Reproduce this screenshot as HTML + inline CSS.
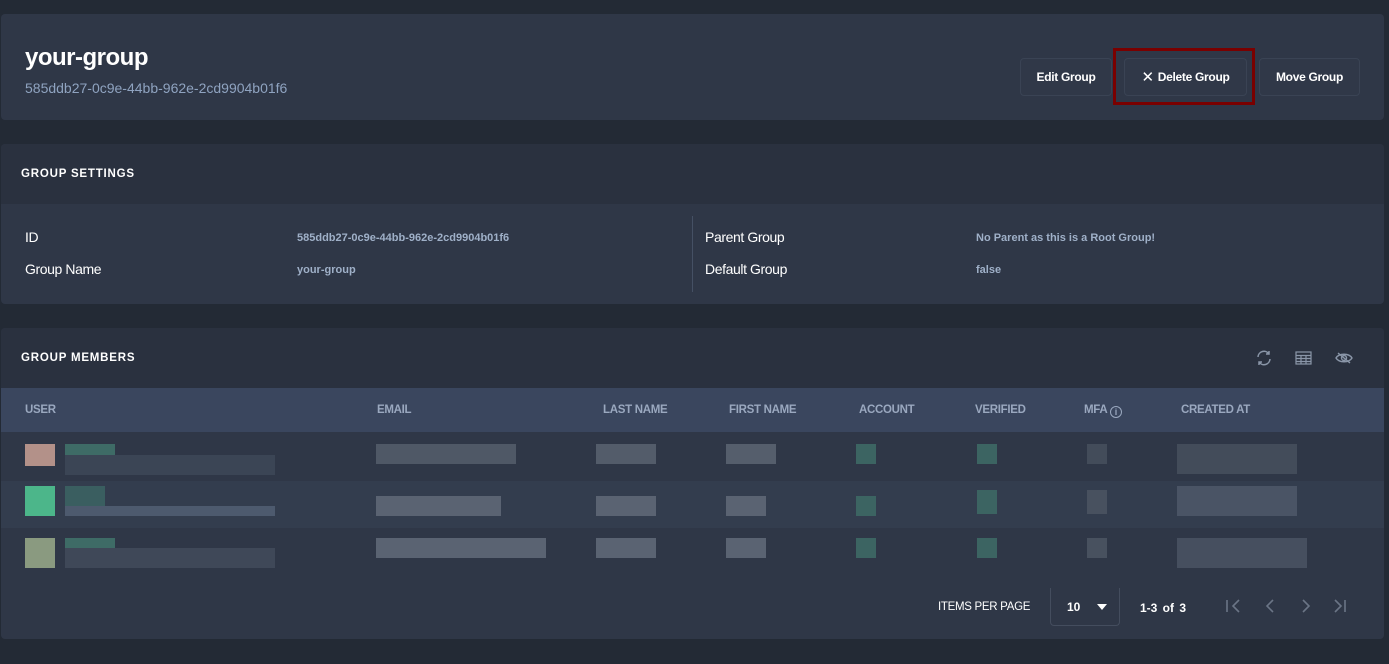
<!DOCTYPE html>
<html><head><meta charset="utf-8"><style>
*{box-sizing:border-box;margin:0;padding:0}
body{width:1389px;height:664px;background:#232a35;font-family:"Liberation Sans",sans-serif;position:relative;overflow:hidden;color:#fff}
.card{position:absolute;left:1px;width:1383px;background:#2f3747;border-radius:4px}
.abs{position:absolute}
.btn{position:absolute;top:58px;height:38px;border:1px solid #3a4354;border-radius:4px;background:#303848;font-size:12px;font-weight:bold;color:#fff;display:flex;align-items:center;justify-content:center;letter-spacing:-0.3px}
.h{font-size:11.5px;font-weight:bold;letter-spacing:0.8px;color:#fff}
.lbl{font-size:14px;color:#fff;letter-spacing:-0.4px}
.val{font-size:11px;color:#9fb0c8;font-weight:bold}
.th{position:absolute;top:404px;font-size:11.5px;color:#9aa8bf;letter-spacing:-0.3px;font-weight:bold}
.b{position:absolute}
</style></head><body>
<div class="card" style="top:14px;height:106px;background:#2f3747"></div>
<div class="abs" style="left:25px;top:44px;font-size:24px;font-weight:bold;letter-spacing:-0.5px">your-group</div>
<div class="abs" style="left:25px;top:80px;font-size:14px;color:#8fa3c0">585ddb27-0c9e-44bb-962e-2cd9904b01f6</div>
<div class="btn" style="left:1020px;width:92px">Edit Group</div>
<div class="btn" style="left:1124px;width:123px"><span style="font-size:15px;margin-right:4px;font-weight:normal">✕</span>Delete Group</div>
<div class="abs" style="left:1113px;top:48px;width:142px;height:57px;border:3px solid #7a0000"></div>
<div class="btn" style="left:1259px;width:101px">Move Group</div>

<div class="card" style="top:144px;height:160px;background:#2f3747"></div>
<div class="abs" style="left:1px;top:144px;width:1383px;height:60px;background:#2a313f;border-radius:4px 4px 0 0"></div>
<div class="abs h" style="left:21px;top:168px">GROUP SETTINGS</div>
<div class="abs lbl" style="left:25px;top:229px">ID</div>
<div class="abs lbl" style="left:25px;top:261px">Group Name</div>
<div class="abs val" style="left:297px;top:232px">585ddb27-0c9e-44bb-962e-2cd9904b01f6</div>
<div class="abs val" style="left:297px;top:264px">your-group</div>
<div class="abs" style="left:692px;top:216px;width:1px;height:76px;background:#455064"></div>
<div class="abs lbl" style="left:705px;top:229px">Parent Group</div>
<div class="abs lbl" style="left:705px;top:261px">Default Group</div>
<div class="abs val" style="left:976px;top:232px">No Parent as this is a Root Group!</div>
<div class="abs val" style="left:976px;top:264px">false</div>

<div class="card" style="top:328px;height:311px;background:#2f3747"></div>
<div class="abs" style="left:1px;top:328px;width:1383px;height:60px;background:#2a313f;border-radius:4px 4px 0 0"></div>
<div class="abs h" style="left:21px;top:352px">GROUP MEMBERS</div>
<svg class="abs" style="left:1255px;top:349px" width="18" height="18" viewBox="0 0 18 18" fill="none" stroke="#8a96a8" stroke-width="1.5"><path d="M3 8a6 6 0 0 1 11-3M15 10a6 6 0 0 1-11 3M14 2v3h-3M4 16v-3h3"/></svg>
<svg class="abs" style="left:1295px;top:351px" width="17" height="14" viewBox="0 0 17 14" fill="none" stroke="#8a96a8" stroke-width="1.2"><rect x="1" y="1" width="15" height="12"/><path d="M1 4.5h15M1 7.5h15M1 10.5h15M6 4.5v8.5M11 4.5v8.5"/></svg>
<svg class="abs" style="left:1335px;top:352px" width="18" height="12" viewBox="0 0 18 12" fill="none" stroke="#8a96a8" stroke-width="1.4"><path d="M1 6c3-5 13-5 16 0c-3 5-13 5-16 0z"/><circle cx="9" cy="6" r="2.5"/><path d="M3 1l12 10"/></svg>
<div class="abs" style="left:1px;top:388px;width:1383px;height:44px;background:#3a465e"></div>
<div class="th" style="left:25px">USER</div>
<div class="th" style="left:377px">EMAIL</div>
<div class="th" style="left:603px">LAST NAME</div>
<div class="th" style="left:729px">FIRST NAME</div>
<div class="th" style="left:859px">ACCOUNT</div>
<div class="th" style="left:975px">VERIFIED</div>
<div class="th" style="left:1084px">MFA <span style="display:inline-block;width:12px;height:12px;border:1.3px solid #9aa8bf;border-radius:50%;font-size:9px;text-align:center;line-height:10px;vertical-align:-2px">i</span></div>
<div class="th" style="left:1181px">CREATED AT</div>
<div class="abs" style="left:1px;top:481px;width:1383px;height:47px;background:#333d4e"></div>
<!-- row 1 -->
<div class="b" style="left:25px;top:444px;width:30px;height:22px;background:#b39189"></div>
<div class="b" style="left:65px;top:444px;width:50px;height:11px;background:#3e6b66"></div>
<div class="b" style="left:65px;top:455px;width:210px;height:20px;background:#3b4555"></div>
<div class="b" style="left:376px;top:444px;width:140px;height:20px;background:#4f5866"></div>
<div class="b" style="left:596px;top:444px;width:60px;height:20px;background:#535c6a"></div>
<div class="b" style="left:726px;top:444px;width:50px;height:20px;background:#555e6c"></div>
<div class="b" style="left:856px;top:444px;width:20px;height:20px;background:#3c6462"></div>
<div class="b" style="left:977px;top:444px;width:20px;height:20px;background:#3c6462"></div>
<div class="b" style="left:1087px;top:444px;width:20px;height:20px;background:#434c5a"></div>
<div class="b" style="left:1177px;top:444px;width:120px;height:30px;background:#434c5a"></div>
<!-- row 2 -->
<div class="b" style="left:25px;top:486px;width:30px;height:30px;background:#4cb68a"></div>
<div class="b" style="left:65px;top:486px;width:40px;height:20px;background:#3a5e60"></div>
<div class="b" style="left:65px;top:506px;width:210px;height:10px;background:#4d5a6e"></div>
<div class="b" style="left:376px;top:496px;width:125px;height:20px;background:#5a6372"></div>
<div class="b" style="left:596px;top:496px;width:60px;height:20px;background:#5a6372"></div>
<div class="b" style="left:726px;top:496px;width:40px;height:20px;background:#5a6372"></div>
<div class="b" style="left:856px;top:496px;width:20px;height:20px;background:#3c6462"></div>
<div class="b" style="left:977px;top:490px;width:20px;height:24px;background:#3c6462"></div>
<div class="b" style="left:1087px;top:490px;width:20px;height:24px;background:#48515f"></div>
<div class="b" style="left:1177px;top:486px;width:120px;height:30px;background:#4a5465"></div>
<!-- row 3 -->
<div class="b" style="left:25px;top:538px;width:30px;height:30px;background:#8a9a80"></div>
<div class="b" style="left:65px;top:538px;width:50px;height:10px;background:#3e6b66"></div>
<div class="b" style="left:65px;top:548px;width:210px;height:20px;background:#3f4858"></div>
<div class="b" style="left:376px;top:538px;width:170px;height:20px;background:#5a6372"></div>
<div class="b" style="left:596px;top:538px;width:60px;height:20px;background:#5a6372"></div>
<div class="b" style="left:726px;top:538px;width:40px;height:20px;background:#5a6372"></div>
<div class="b" style="left:856px;top:538px;width:20px;height:20px;background:#3c6462"></div>
<div class="b" style="left:977px;top:538px;width:20px;height:20px;background:#3c6462"></div>
<div class="b" style="left:1087px;top:538px;width:20px;height:20px;background:#48515f"></div>
<div class="b" style="left:1177px;top:538px;width:130px;height:30px;background:#464f5f"></div>
<!-- pagination -->
<div class="abs" style="left:938px;top:601px;font-size:11.5px;color:#fff;letter-spacing:-0.3px">ITEMS PER PAGE</div>
<div class="abs" style="left:1050px;top:588px;width:70px;height:38px;border:1px solid #444d5e;border-top:none;border-radius:0 0 4px 4px"></div>
<div class="abs" style="left:1067px;top:600px;font-size:12px;font-weight:bold">10</div>
<div class="abs" style="left:1097px;top:604px;width:0;height:0;border-left:5px solid transparent;border-right:5px solid transparent;border-top:6px solid #fff"></div>
<div class="abs" style="left:1140px;top:601px;font-size:12px;font-weight:bold;word-spacing:2px">1-3 of 3</div>
<svg class="abs" style="left:1225px;top:598px" width="130" height="16" viewBox="0 0 130 16" fill="none" stroke="#6b7586" stroke-width="1.6"><path d="M2 2v12M14 2l-6 6 6 6M48 2l-6 6 6 6M78 2l6 6-6 6M110 2l6 6-6 6M120 2v12"/></svg>
</body></html>
